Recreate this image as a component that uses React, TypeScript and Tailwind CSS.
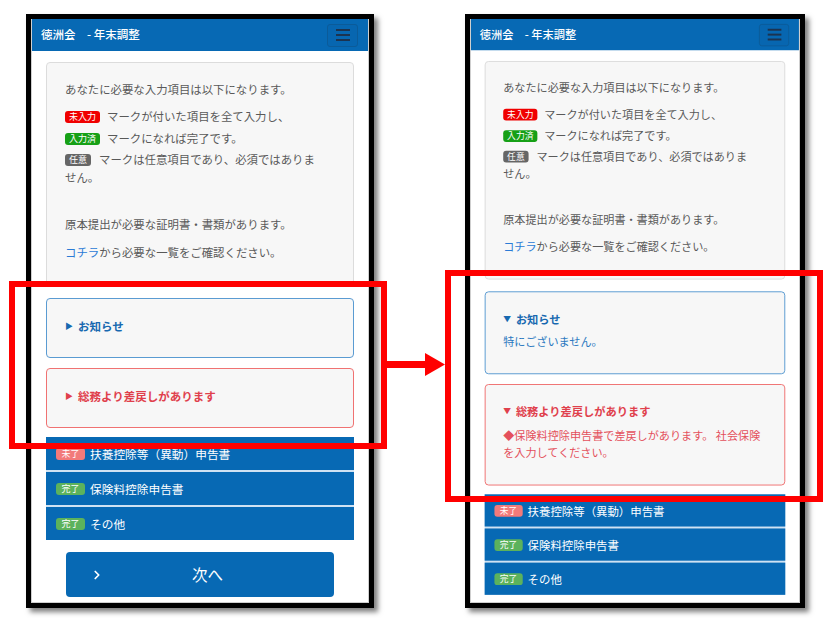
import { ChevronRight } from "lucide-react";

const blue = "bg-[#0769b4]";

function Mark({ label, color }: { label: string; color: string }) {
  return (
    <span
      className={`inline-flex h-[12px] items-center rounded-[3px] px-[4px] text-[9px] leading-none text-white align-[1px] ${color}`}
    >
      {label}
    </span>
  );
}

function Panel({
  tone,
  title,
  open,
  children,
}: {
  tone: "blue" | "red";
  title: string;
  open: boolean;
  children?: React.ReactNode;
}) {
  const isBlue = tone === "blue";
  return (
    <div
      className={`rounded-[4px] border bg-[#f7f7f7] px-[18px] pt-[18px] pb-[22px] ${
        isBlue ? "border-[#5a9bd2]" : "border-[#f07272]"
      }`}
    >
      <div
        className={`flex items-center gap-[5px] text-[11.5px] leading-[18px] font-bold ${
          isBlue ? "text-[#1769b0]" : "text-[#e0404c]"
        }`}
      >
        <span className="text-[8px]">{open ? "▼" : "▶"}</span>
        <span>{title}</span>
      </div>
      {open && children}
    </div>
  );
}

const items = [
  { label: "未了", color: "bg-[#f27a7a]", name: "扶養控除等（異動）申告書" },
  { label: "完了", color: "bg-[#5cb25c]", name: "保険料控除申告書" },
  { label: "完了", color: "bg-[#5cb25c]", name: "その他" },
];

function Screen({ open }: { open: boolean }) {
  return (
    <div className="flex w-[336px] flex-col bg-white">
      {/* Navbar */}
      <header className={`flex h-[32px] shrink-0 items-center justify-between pl-[9px] pr-[10px] ${blue}`}>
        <span className="text-[11.5px] font-medium text-white">徳洲会　- 年末調整</span>
        <button className="flex h-[23px] w-[31px] flex-col items-center justify-center gap-[3px] rounded-[3px] border border-[#0b5b99] bg-[#0766b0]">
          <span className="block h-[2px] w-[14px] bg-[#1c3350]" />
          <span className="block h-[2px] w-[14px] bg-[#1c3350]" />
          <span className="block h-[2px] w-[14px] bg-[#1c3350]" />
        </button>
      </header>

      <div className="flex flex-col px-[14px] pt-[11px]">
        {/* Guide */}
        <div className="rounded-[4px] border border-[#dcdcdc] bg-[#f7f7f7] px-[18px] pt-[17px] pb-[24px] text-[11.4px] leading-[18px] text-[#595959]">
          <p>あなたに必要な入力項目は以下になります。</p>
          <p className="mt-[9px] whitespace-nowrap">
            <Mark label="未入力" color="bg-[#f00000]" />
            <span className="ml-[7px]">マークが付いた項目を全て入力し、</span>
          </p>
          <p className="mt-[4px] whitespace-nowrap">
            <Mark label="入力済" color="bg-[#16a016]" />
            <span className="ml-[7px]">マークになれば完了です。</span>
          </p>
          <p className="mt-[3px] whitespace-nowrap">
            <Mark label="任意" color="bg-[#666666]" />
            <span className="ml-[8px]">マークは任意項目であり、必須ではありま</span>
            <br />
            せん。
          </p>
          <p className="mt-[29px]">原本提出が必要な証明書・書類があります。</p>
          <p className="mt-[10px]">
            <span className="text-[#2b7bd6]">コチラ</span>から必要な一覧をご確認ください。
          </p>
        </div>

        <div className="mt-[12px]">
          <Panel tone="blue" title="お知らせ" open={open}>
            <p className="mt-[5px] mb-[2px] text-[11.4px] leading-[18px] text-[#2a78c0]">特にございません。</p>
          </Panel>
        </div>
        <div className="mt-[10px]">
          <Panel tone="red" title="総務より差戻しがあります" open={open}>
            <p className="mt-[6px] mb-[2px] whitespace-nowrap text-[11.4px] leading-[18px] text-[#e4505c]">
              ◆保険料控除申告書で差戻しがあります。 社会保険
              <br />
              を入力してください。
            </p>
          </Panel>
        </div>

        {/* Forms */}
        <div className="mt-[9px] flex flex-col gap-[2px] bg-[#cfe2f3]">
          {items.map((it) => (
            <div key={it.name} className={`flex h-[33px] items-center gap-[5px] px-[10px] ${blue}`}>
              <span
                className={`inline-flex h-[12px] w-[29px] items-center justify-center rounded-[3px] text-[9px] leading-none text-white ${it.color}`}
              >
                {it.label}
              </span>
              <span className="text-[11.7px] text-white">{it.name}</span>
            </div>
          ))}
        </div>

        {!open && (
          <button
            className={`mx-[20px] mt-[12px] flex h-[45px] items-center rounded-[4px] pl-[24px] pr-[23px] text-white ${blue}`}
          >
            <ChevronRight size={14} strokeWidth={3} />
            <span className="flex-1 text-center text-[15.5px]">次へ</span>
          </button>
        )}
      </div>
    </div>
  );
}

export default function App() {
  return (
    <div className="relative flex h-[618px] w-[833px] items-start overflow-hidden bg-white pl-[26px] pt-[14px] font-['Noto_Sans_CJK_JP','Noto_Sans',sans-serif]">
      {/* Before */}
      <div className="h-[594px] w-[348px] shrink-0 border-[5px] border-black shadow-[4px_4px_5px_rgba(0,0,0,0.5)]">
        <div className="h-full overflow-hidden border-x border-b border-[#cfcfcf]">
          <Screen open={false} />
        </div>
      </div>

      {/* After */}
      <div className="ml-[91px] h-[594px] w-[340px] shrink-0 border-[5px] border-black shadow-[4px_4px_5px_rgba(0,0,0,0.5)]">
        <div className="h-full overflow-hidden border-x border-b border-[#cfcfcf]">
          <div className="origin-top-left scale-[0.976]">
            <Screen open={true} />
          </div>
        </div>
      </div>

      {/* Highlights */}
      <div className="absolute left-[9px] top-[281px] h-[168px] w-[378px] border-[6px] border-[#ff0000]" />
      <div className="absolute left-[445px] top-[270px] h-[232px] w-[378px] border-[6px] border-[#ff0000]" />
      <svg className="absolute left-[386px] top-[352px]" width="60" height="25" viewBox="0 0 60 25">
        <rect x="0" y="9" width="40" height="7" fill="#ff0000" />
        <polygon points="39,1 59,12.5 39,24" fill="#ff0000" />
      </svg>
    </div>
  );
}
